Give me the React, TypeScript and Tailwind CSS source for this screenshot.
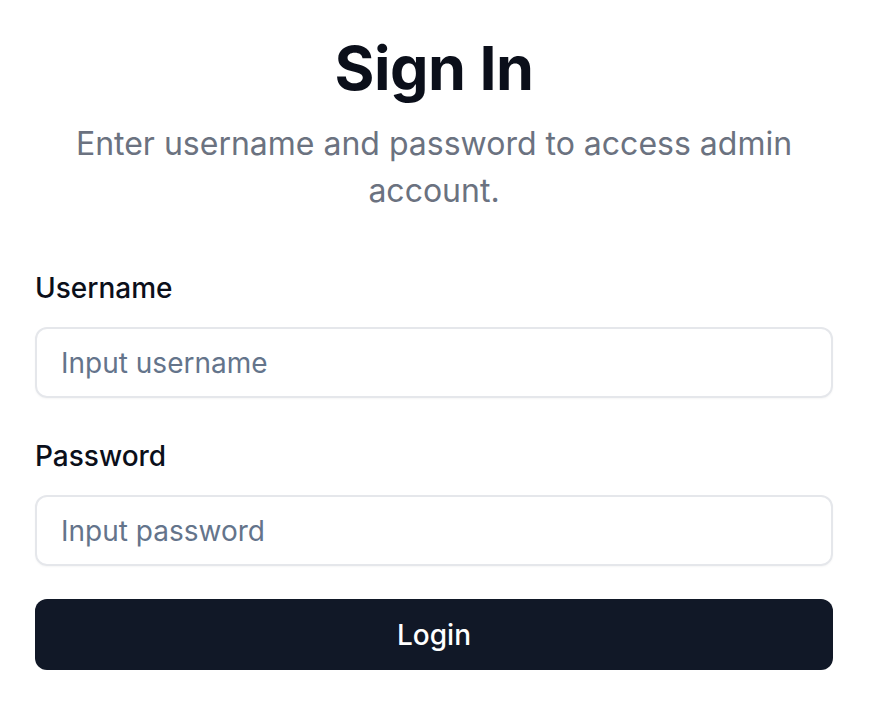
export default function App() {
  return (
    <div className="min-h-screen bg-white font-['Inter','Noto_Sans',sans-serif]">
      <div className="pl-[35px] pr-[39px] pt-[30px] pb-8">
        <div className="flex flex-col items-center text-center">
          <h1 className="text-[61px] leading-[76px] font-bold tracking-[-0.5px] text-[#0b0f1a]">Sign In</h1>
          <p className="mt-[14px] max-w-[760px] text-[32px] leading-[47px] text-[#6b7280]">
            Enter username and password to access admin account.
          </p>
        </div>
        <form className="mt-[58px] flex flex-col" onSubmit={(e) => e.preventDefault()}>
          <label className="text-[28px] leading-[32px] font-medium text-[#0b0f1a]">Username</label>
          <input
            type="text"
            placeholder="Input username"
            className="mt-[23px] h-[71px] w-full rounded-[12px] border-2 border-[#e5e7eb] px-[24px] text-[28px] text-[#0b0f1a] placeholder:text-[#64748b] shadow-[0_1px_2px_rgba(0,0,0,0.04)] outline-none"
          />
          <label className="mt-[42px] text-[28px] leading-[32px] font-medium text-[#0b0f1a]">Password</label>
          <input
            type="password"
            placeholder="Input password"
            className="mt-[23px] h-[71px] w-full rounded-[12px] border-2 border-[#e5e7eb] px-[24px] text-[28px] text-[#0b0f1a] placeholder:text-[#64748b] shadow-[0_1px_2px_rgba(0,0,0,0.04)] outline-none"
          />
          <button
            type="submit"
            className="mt-[33px] h-[71px] w-full rounded-[12px] bg-[#111827] text-[28px] font-medium text-white"
          >
            Login
          </button>
        </form>
      </div>
    </div>
  );
}
